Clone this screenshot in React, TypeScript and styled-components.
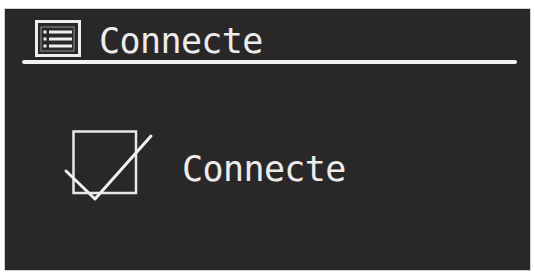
import React from "react";
import styled, { createGlobalStyle } from "styled-components";

const Global = createGlobalStyle`
  html, body { margin: 0; padding: 0; background: #ffffff; }
  body { font-family: "DejaVu Sans Mono", "Liberation Mono", monospace; }
`;

const Page = styled.div`
  width: 534px;
  height: 273px;
  padding: 9px 0 0 5px;
  box-sizing: border-box;
`;

const Screen = styled.div`
  width: 525px;
  height: 261px;
  background: #2a2728;
  display: flex;
  flex-direction: column;
  box-shadow: 0 0 0 1px #cfcfcf;
`;

const Header = styled.div`
  display: flex;
  align-items: flex-start;
  height: 51px;
  padding-left: 29px;
`;

const Label = styled.span<{ $top: number }>`
  display: block;
  margin-top: ${(p) => p.$top}px;
  font-family: "DejaVu Sans Mono", "Liberation Mono", monospace;
  font-size: 35px;
  line-height: 34px;
  height: 34px;
  letter-spacing: -0.6px;
  color: #ececec;
  white-space: nowrap;
`;

const Rule = styled.div`
  height: 4px;
  margin: 0 13px 0 17px;
  border-radius: 2px;
  background: #f2f2f2;
`;

const Body = styled.div`
  display: flex;
  align-items: flex-start;
  margin-top: 63px;
  padding-left: 58px;
  gap: 27px;
`;

const MenuIcon = () => (
  <svg width="48" height="40" viewBox="0 0 48 40" style={{ marginTop: 10, marginRight: 17, flexShrink: 0 }}>
    <rect x="2.5" y="2.5" width="43" height="34" fill="none" stroke="#eeeeee" strokeWidth="3" />
    <rect x="7" y="8" width="33" height="24" fill="none" stroke="#eeeeee" strokeWidth="1" opacity="0.55" />
    {[11.5, 18.5, 25.5].map((y) => (
      <g key={y}>
        <rect x="9.5" y={y} width="3" height="3" fill="#eeeeee" />
        <rect x="15" y={y} width="23" height="3" fill="#eeeeee" />
      </g>
    ))}
  </svg>
);

const CheckIcon = () => (
  <svg width="92" height="76" viewBox="0 0 92 76" style={{ flexShrink: 0 }}>
    <rect x="10.5" y="4.5" width="62.5" height="61.5" fill="none" stroke="#e8e8e8" strokeWidth="2.5" />
    <polyline
      points="3,44 32,72 88,9"
      fill="none"
      stroke="#f0f0f0"
      strokeWidth="3"
      strokeLinejoin="round"
      strokeLinecap="round"
    />
  </svg>
);

export default function App() {
  return (
    <>
      <Global />
      <Page>
        <Screen>
          <Header>
            <MenuIcon />
            <Label $top={15}>Connecte</Label>
          </Header>
          <Rule />
          <Body>
            <CheckIcon />
            <Label $top={25}>Connecte</Label>
          </Body>
        </Screen>
      </Page>
    </>
  );
}
